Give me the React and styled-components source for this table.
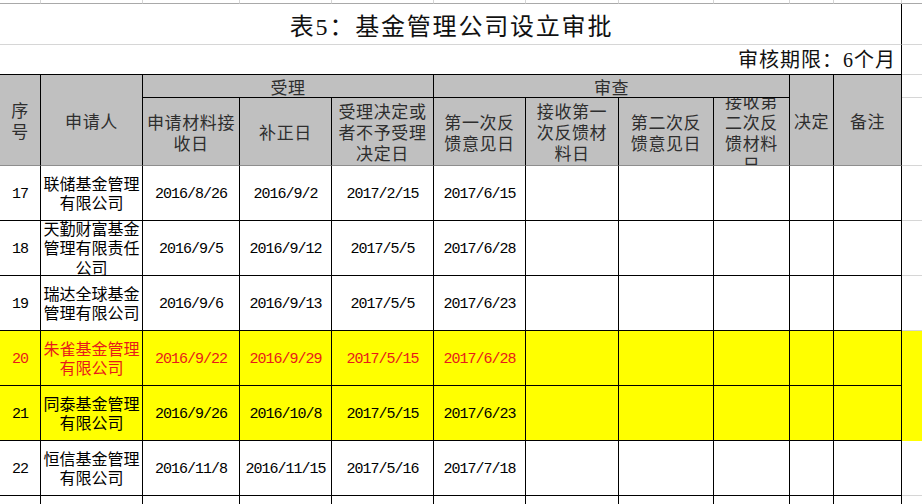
import React from "react";
import styled, { createGlobalStyle } from "styled-components";

const GlobalStyle = createGlobalStyle`
  html, body {
    margin: 0;
    padding: 0;
    background: #ffffff;
  }
  * {
    box-sizing: border-box;
  }
`;

const CJK = `"Noto Sans CJK SC", "Noto Sans", sans-serif`;
const GRID = "#d6d6d6";
const INK = "#000000";
const YELLOW = "#ffff00";

const COLS = [41, 102, 97, 92, 102, 92, 93, 95, 76, 44, 68, 20];
const TABLE_COLS = 11;

const HEADERS = [
  { lines: ["序", "号"], col: 1, row: 4, rs: 2 },
  { lines: ["申请人"], col: 2, row: 4, rs: 2 },
  { lines: ["受理"], col: 3, row: 4, cs: 3, group: true },
  { lines: ["审查"], col: 6, row: 4, cs: 4, group: true },
  { lines: ["决定"], col: 10, row: 4, rs: 2 },
  { lines: ["备注"], col: 11, row: 4, rs: 2 },
  { lines: ["申请材料接", "收日"], col: 3, row: 5 },
  { lines: ["补正日"], col: 4, row: 5 },
  { lines: ["受理决定或", "者不予受理", "决定日"], col: 5, row: 5 },
  { lines: ["第一次反", "馈意见日"], col: 6, row: 5 },
  { lines: ["接收第一", "次反馈材", "料日"], col: 7, row: 5 },
  { lines: ["第二次反", "馈意见日"], col: 8, row: 5 },
  { lines: ["接收第", "二次反", "馈材料", "日"], col: 9, row: 5 },
];

const ROWS = [
  { no: "17", name: ["联储基金管理", "有限公司"], dates: ["2016/8/26", "2016/9/2", "2017/2/15", "2017/6/15"] },
  { no: "18", name: ["天勤财富基金", "管理有限责任", "公司"], dates: ["2016/9/5", "2016/9/12", "2017/5/5", "2017/6/28"] },
  { no: "19", name: ["瑞达全球基金", "管理有限公司"], dates: ["2016/9/6", "2016/9/13", "2017/5/5", "2017/6/23"] },
  { no: "20", name: ["朱雀基金管理", "有限公司"], dates: ["2016/9/22", "2016/9/29", "2017/5/15", "2017/6/28"], fill: true, red: true },
  { no: "21", name: ["同泰基金管理", "有限公司"], dates: ["2016/9/26", "2016/10/8", "2017/5/15", "2017/6/23"], fill: true },
  { no: "22", name: ["恒信基金管理", "有限公司"], dates: ["2016/11/8", "2016/11/15", "2017/5/16", "2017/7/18"] },
  { no: "", name: [], dates: ["", "", "", ""] },
];

const Sheet = styled.div`
  display: grid;
  grid-template-columns: ${COLS.map((w) => `${w}px`).join(" ")};
  grid-template-rows: 4px 41px 30px 23px 68px repeat(7, 55px);
  width: 922px;
  height: 504px;
  overflow: hidden;
  background: #ffffff;
`;

const Placed = styled.div`
  grid-column: ${(p) => p.$col} / span ${(p) => p.$cs || 1};
  grid-row: ${(p) => p.$row} / span ${(p) => p.$rs || 1};
  min-width: 0;
  overflow: hidden;
`;

const StripCell = styled(Placed)`
  border-bottom: 1px solid #a9a9a9;
  border-right: ${(p) => (p.$last ? "none" : `1px solid ${GRID}`)};
`;

const TitleCell = styled(Placed)`
  display: flex;
  align-items: center;
  justify-content: center;
  border-right: 1px solid ${INK};
  border-bottom: 1px solid ${GRID};
  font-family: "Liberation Serif", ${CJK};
  font-size: 24px;
  letter-spacing: 1.8px;
  color: #111111;
  padding-left: 2px;
`;

const NoteCell = styled(Placed)`
  display: flex;
  align-items: flex-end;
  justify-content: flex-end;
  padding: 0 5px 1px 0;
  border-right: 1px solid ${INK};
  border-bottom: 1px solid ${INK};
  font-family: "Liberation Serif", ${CJK};
  font-size: 20px;
  line-height: 26px;
  letter-spacing: 1px;
  color: #111111;
`;

const MarginCell = styled(Placed)`
  background: ${(p) => (p.$fill ? YELLOW : "transparent")};
  border-bottom: 1px solid ${(p) => (p.$fill ? YELLOW : GRID)};
`;

const HeadCell = styled(Placed)`
  display: flex;
  flex-direction: column;
  align-items: center;
  justify-content: center;
  background: #c0c0c0;
  border-right: 1px solid ${INK};
  border-bottom: 1px solid ${(p) => (p.$group ? INK : "#8e8e8e")};
  font-family: ${CJK};
  font-size: 17px;
  line-height: 21px;
  letter-spacing: 0.6px;
  color: #2e2e2e;
  text-align: center;
  white-space: nowrap;
`;

const DataCell = styled(Placed)`
  display: flex;
  flex-direction: column;
  align-items: center;
  justify-content: center;
  background: ${(p) => (p.$fill ? YELLOW : "#ffffff")};
  border-right: 1px solid ${INK};
  border-bottom: 1px solid ${INK};
  color: ${(p) => (p.$red ? "#e81a1a" : "#000000")};
  white-space: nowrap;
`;

const NameCell = styled(DataCell)`
  font-family: ${CJK};
  font-size: 16px;
  line-height: 19.5px;
`;

const NumCell = styled(DataCell)`
  font-family: "Liberation Mono", monospace;
  font-size: 15px;
  letter-spacing: -1px;
  padding-top: 2px;
`;

const Line = styled.span`
  display: block;
`;

export default function App() {
  return (
    <>
      <GlobalStyle />
      <Sheet>
        {COLS.map((_, i) => (
          <StripCell key={`s${i}`} $col={i + 1} $row={1} $last={i === COLS.length - 1} />
        ))}

        <TitleCell $col={1} $cs={TABLE_COLS} $row={2}>
          表5：基金管理公司设立审批
        </TitleCell>
        <MarginCell $col={12} $row={2} />

        <NoteCell $col={1} $cs={TABLE_COLS} $row={3}>
          审核期限：6个月
        </NoteCell>
        <MarginCell $col={12} $row={3} />

        {HEADERS.map((h) => (
          <HeadCell
            key={h.lines.join("")}
            $col={h.col}
            $row={h.row}
            $cs={h.cs}
            $rs={h.rs}
            $group={h.group}
          >
            {h.lines.map((l) => (
              <Line key={l}>{l}</Line>
            ))}
          </HeadCell>
        ))}
        <MarginCell $col={12} $row={4} />
        <MarginCell $col={12} $row={5} />

        {ROWS.map((r, i) => {
          const row = 6 + i;
          return (
            <React.Fragment key={`r${i}`}>
              <NumCell $col={1} $row={row} $fill={r.fill} $red={r.red}>
                {r.no}
              </NumCell>
              <NameCell $col={2} $row={row} $fill={r.fill} $red={r.red}>
                {r.name.map((l) => (
                  <Line key={l}>{l}</Line>
                ))}
              </NameCell>
              {r.dates.map((d, j) => (
                <NumCell key={`d${j}`} $col={3 + j} $row={row} $fill={r.fill} $red={r.red}>
                  {d}
                </NumCell>
              ))}
              {[7, 8, 9, 10, 11].map((c) => (
                <DataCell key={`e${c}`} $col={c} $row={row} $fill={r.fill} />
              ))}
              <MarginCell $col={12} $row={row} $fill={r.fill} />
            </React.Fragment>
          );
        })}
      </Sheet>
    </>
  );
}
